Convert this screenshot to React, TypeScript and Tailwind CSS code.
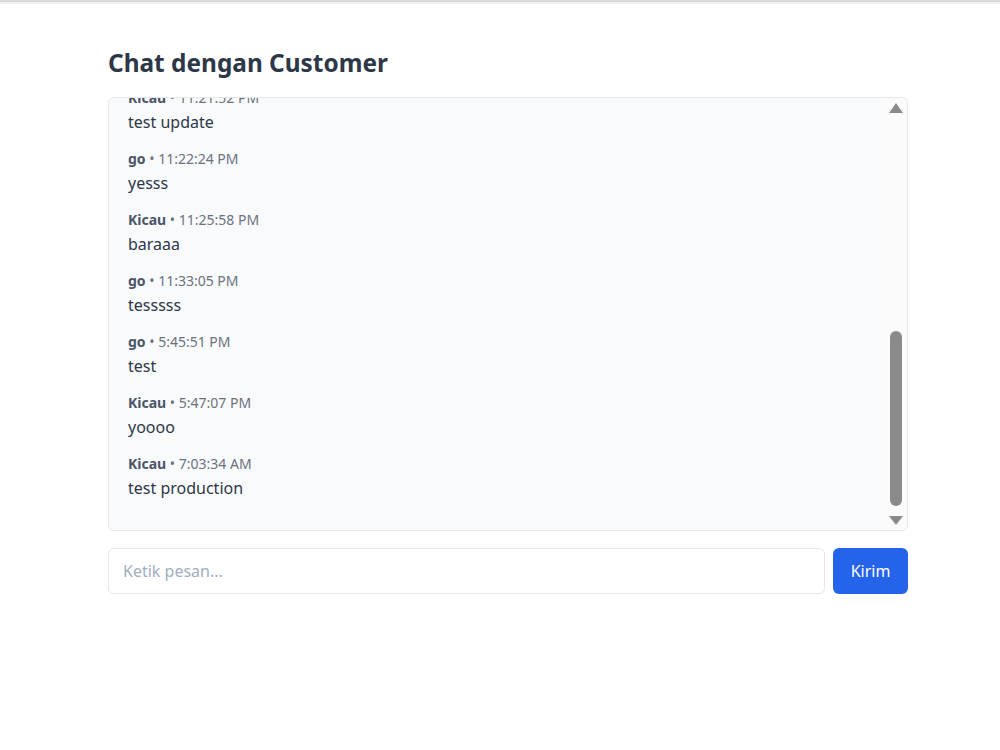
import React from "react";

const messages = [
  { name: "Kicau", time: "11:21:52 PM", text: "test update" },
  { name: "go", time: "11:22:24 PM", text: "yesss" },
  { name: "Kicau", time: "11:25:58 PM", text: "baraaa" },
  { name: "go", time: "11:33:05 PM", text: "tesssss" },
  { name: "go", time: "5:45:51 PM", text: "test" },
  { name: "Kicau", time: "5:47:07 PM", text: "yoooo" },
  { name: "Kicau", time: "7:03:34 AM", text: "test production" },
];

export default function App() {
  return (
    <div
      className="min-h-[750px] w-full bg-white"
      style={{ fontFamily: '"Noto Sans", "Open Sans", Arial, sans-serif' }}
    >
      <div className="h-[2px] bg-[#d9d9d9]" />
      <div className="h-[2px] bg-[#f0f0f0]" />
      <div className="flex justify-center pl-[16px]">
        <div className="w-[800px] pt-[43px]">
          <h1 className="text-[24.4px] leading-[32px] font-bold text-[#2d3748] mb-[18px]">
            Chat dengan Customer
          </h1>
          <div className="flex h-[434px] rounded-md border border-[#e5e7eb] bg-[#f9fafb] overflow-hidden">
            <div className="flex-1 flex flex-col justify-end overflow-hidden pl-[19px] pb-[15px]">
              {messages.map((m, i) => (
                <div key={i} className="mb-[15px] shrink-0">
                  <div className="text-[14px] leading-[20px] mb-[2px]">
                    <span className="font-bold text-[#4a5568]">{m.name}</span>
                    <span className="text-[#6b7280]"> • {m.time}</span>
                  </div>
                  <div className="text-[16px] leading-[24px] text-[#2d3748]">{m.text}</div>
                </div>
              ))}
            </div>
            <div className="w-[22px] flex flex-col items-center bg-[#fbfbfb] pt-[5px] pb-[5px]">
              <svg width="14" height="10" viewBox="0 0 14 10">
                <polygon points="7,0 14,10 0,10" fill="#8a8a8a" />
              </svg>
              <div className="flex-1" />
              <div className="w-[12px] h-[175px] rounded-full bg-[#8a8a8a] mb-[10px]" />
              <svg width="14" height="9" viewBox="0 0 14 9">
                <polygon points="0,0 14,0 7,9" fill="#8a8a8a" />
              </svg>
            </div>
          </div>
          <div className="flex gap-2 mt-[17px]">
            <input
              className="flex-1 h-[46px] rounded-md border border-[#e5e7eb] bg-white px-[14px] text-[16px] text-[#2d3748] placeholder-[#a0aec0] outline-none"
              placeholder="Ketik pesan..."
            />
            <button className="w-[75px] h-[46px] rounded-md bg-[#2563eb] text-white text-[16px]">
              Kirim
            </button>
          </div>
        </div>
      </div>
    </div>
  );
}
